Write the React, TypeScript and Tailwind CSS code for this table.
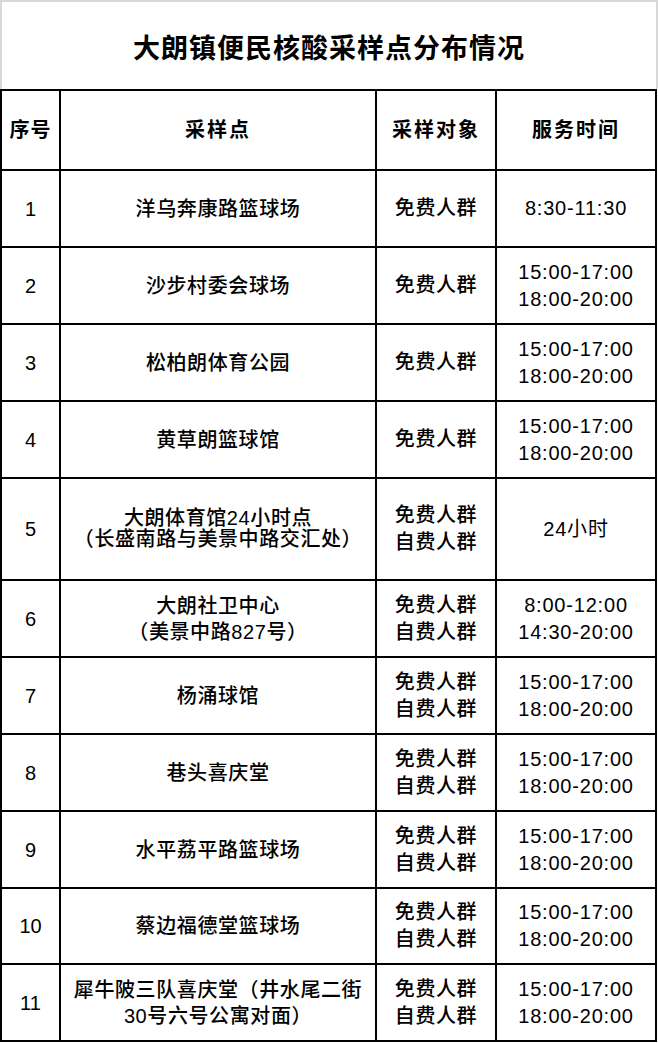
import React from "react";

type Row = {
  no: string;
  place: React.ReactNode;
  target: string[];
  time: string[];
  h: string;
  tight?: boolean;
};

const rows: Row[] = [
  { no: "1", place: "洋乌奔康路篮球场", target: ["免费人群"], time: ["8:30-11:30"], h: "h-[77px]" },
  { no: "2", place: "沙步村委会球场", target: ["免费人群"], time: ["15:00-17:00", "18:00-20:00"], h: "h-[77px]" },
  { no: "3", place: "松柏朗体育公园", target: ["免费人群"], time: ["15:00-17:00", "18:00-20:00"], h: "h-[77px]" },
  { no: "4", place: "黄草朗篮球馆", target: ["免费人群"], time: ["15:00-17:00", "18:00-20:00"], h: "h-[77px]" },
  {
    no: "5",
    place: (
      <>
        大朗体育馆24小时点
        <br />
        （长盛南路与美景中路交汇处）
      </>
    ),
    target: ["免费人群", "自费人群"],
    time: ["24小时"],
    h: "h-[102px]",
    tight: true,
  },
  {
    no: "6",
    place: (
      <>
        大朗社卫中心
        <br />
        （美景中路827号）
      </>
    ),
    target: ["免费人群", "自费人群"],
    time: ["8:00-12:00", "14:30-20:00"],
    h: "h-[77px]",
  },
  { no: "7", place: "杨涌球馆", target: ["免费人群", "自费人群"], time: ["15:00-17:00", "18:00-20:00"], h: "h-[77px]" },
  { no: "8", place: "巷头喜庆堂", target: ["免费人群", "自费人群"], time: ["15:00-17:00", "18:00-20:00"], h: "h-[77px]" },
  { no: "9", place: "水平荔平路篮球场", target: ["免费人群", "自费人群"], time: ["15:00-17:00", "18:00-20:00"], h: "h-[77px]" },
  { no: "10", place: "蔡边福德堂篮球场", target: ["免费人群", "自费人群"], time: ["15:00-17:00", "18:00-20:00"], h: "h-[76px]" },
  {
    no: "11",
    place: (
      <>
        犀牛陂三队喜庆堂（井水尾二街
        <br />
        30号六号公寓对面）
      </>
    ),
    target: ["免费人群", "自费人群"],
    time: ["15:00-17:00", "18:00-20:00"],
    h: "h-[77px]",
  },
];

const cell =
  "flex flex-col items-center justify-center text-center border-r-2 border-b-2 border-black";

export default function App() {
  return (
    <div className="w-[658px] bg-white text-black font-['Liberation_Sans','Noto_Sans_CJK_SC',sans-serif]">
      <div className="h-[89px] border-2 border-b-0 border-[#d8d8d8] flex items-center justify-center pt-[4px]">
        <span className="text-[27px] font-bold tracking-[1px] font-['Noto_Sans_CJK_SC',sans-serif]">
          大朗镇便民核酸采样点分布情况
        </span>
      </div>
      <div className="w-[657px] grid grid-cols-[59px_316px_120px_160px] border-l-2 border-t-2 border-black">
        <div className={`${cell} h-[80px] text-[20px] font-bold tracking-[1px]`}>序号</div>
        <div className={`${cell} h-[80px] text-[20px] font-bold tracking-[2px]`}>采样点</div>
        <div className={`${cell} h-[80px] text-[20px] font-bold tracking-[2px]`}>采样对象</div>
        <div className={`${cell} h-[80px] text-[20px] font-bold tracking-[2px]`}>服务时间</div>
        {rows.map((r) => (
          <React.Fragment key={r.no}>
            <div className={`${cell} ${r.h} text-[20px]`}>{r.no}</div>
            <div
              className={`${cell} ${r.h} text-[20px] font-medium tracking-[0.6px] ${
                r.tight ? "leading-[21px]" : "leading-[26px]"
              }`}
            >
              <div>{r.place}</div>
            </div>
            <div className={`${cell} ${r.h} text-[20px] font-medium tracking-[0.6px] leading-[27px]`}>
              {r.target.map((t, i) => (
                <div key={i}>{t}</div>
              ))}
            </div>
            <div className={`${cell} ${r.h} text-[20px] tracking-[0.8px] leading-[27px]`}>
              {r.time.map((t, i) => (
                <div key={i}>{t}</div>
              ))}
            </div>
          </React.Fragment>
        ))}
      </div>
    </div>
  );
}
